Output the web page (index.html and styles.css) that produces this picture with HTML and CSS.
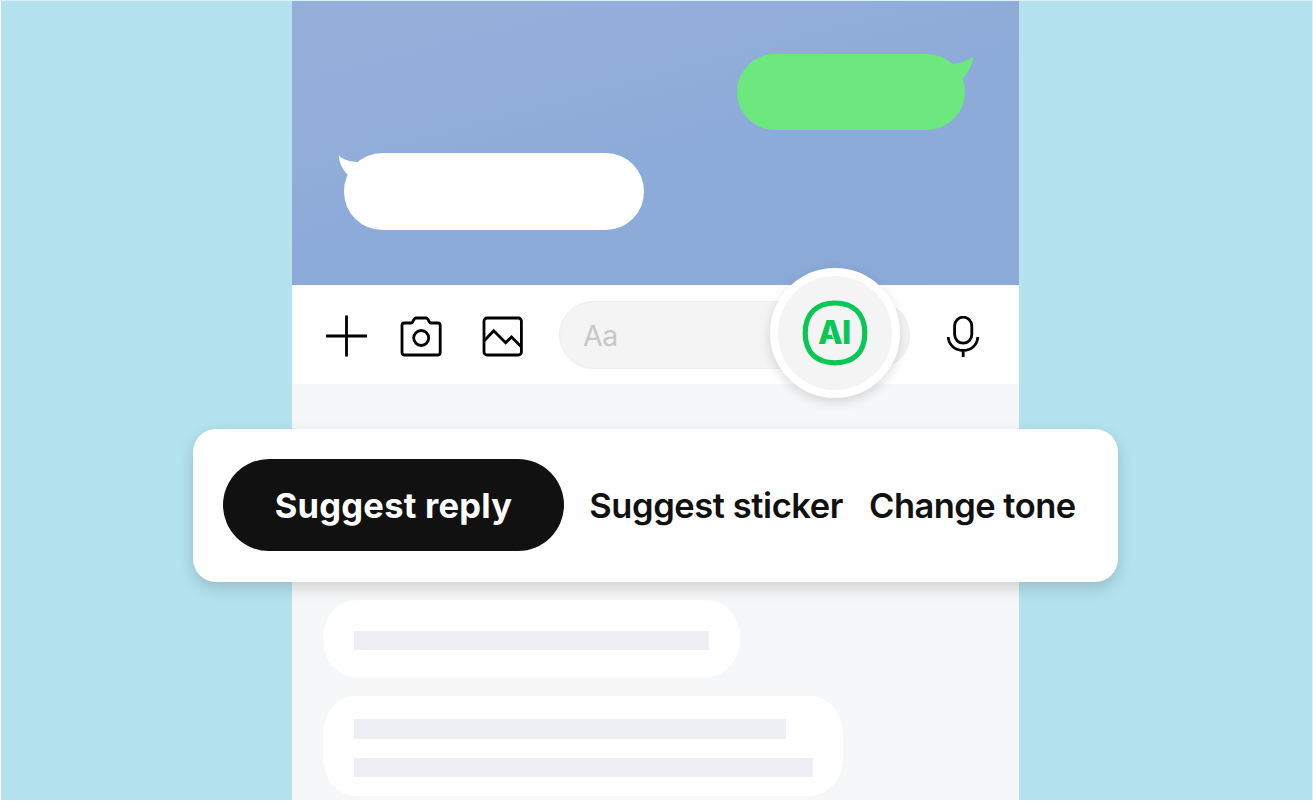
FILE: index.html
```html
<!DOCTYPE html>
<html lang="en">
<head>
<meta charset="utf-8">
<title>AI chat suggestions</title>
<link rel="stylesheet" href="styles.css">
</head>
<body>
<div class="stage">
  <main class="phone">
    <section class="chat">
      <div class="bubble bubble-sent">
        <svg class="tail tail-sent" width="28" height="28" viewBox="0 0 28 28"><path d="M4 9.8C12 9.3 18 7 24.3 2.6C23.5 11 19.5 18.5 13.6 24.6L2 26Z" fill="#6de87e"/></svg>
      </div>
      <div class="bubble bubble-received">
        <svg class="tail tail-received" width="28" height="28" viewBox="0 0 28 28"><path d="M3.7 2.3C8.5 7 15 8.8 22.6 9L25 24L12.7 21.8C7.5 16.5 4.2 10 3.7 2.3Z" fill="#fff"/></svg>
      </div>
    </section>
    <section class="toolbar">
      <svg class="icon icon-plus" width="42" height="42" viewBox="0 0 42 42"><path d="M20.5 0.5V41.5M0 21H41"/></svg>
      <svg class="icon icon-camera" width="42" height="42" viewBox="0 0 42 42"><path d="M4 7H11.2Q12 7 12.5 6L14.3 3Q15 2 16 2H26Q27 2 27.7 3L29.5 6Q30 7 30.8 7H38Q40.2 7 40.2 9.4V36.6Q40.2 39 38 39H4.2Q2 39 2 36.6V9.4Q2 7 4 7Z"/><circle cx="21.2" cy="22" r="7.5"/></svg>
      <svg class="icon icon-picture" width="42" height="42" viewBox="0 0 42 42"><rect x="2" y="2" width="37.4" height="37" rx="3"/><path d="M2 25L11.7 14.7L23.7 26.7L29.5 21L39.5 31"/></svg>
      <div class="input">Aa</div>
      <svg class="icon icon-mic" width="34" height="42" viewBox="0 0 34 42"><rect x="8.6" y="1.2" width="17.2" height="26" rx="8.6"/><path d="M2.2 21C2.8 29 9 34.5 17.2 34.5S31.2 29 31.8 21M17.2 34.5V41"/></svg>
      <div class="ai-button">
        <svg class="ai-ring" width="66" height="66" viewBox="0 0 66 66"><path d="M33 3C51 3 62.8 13 62.8 33S51 62.8 33 62.8S3.2 53 3.2 33S15 3 33 3Z"/><path class="ai-notch" d="M30 34.6L31.6 38.4"/></svg>
        <span class="ai-label">AI</span>
      </div>
    </section>
    <section class="results">
      <div class="result result-short"><div class="line line-1"></div></div>
      <div class="result result-long"><div class="line line-2"></div><div class="line line-3"></div></div>
    </section>
  </main>
  <nav class="suggestions">
    <span class="option option-active">Suggest reply</span>
    <span class="option option-sticker">Suggest sticker</span>
    <span class="option option-tone">Change tone</span>
  </nav>
</div>
</body>
</html>
```
FILE: styles.css
```css
* { box-sizing: border-box; }
body { margin: 0; background: #fff; font-family: Inter, "Liberation Sans", sans-serif; }
.stage {
  position: relative;
  width: 1313px;
  height: 801px;
  border: 1px solid #fff;
  border-top-color: #dcf2f7;
  border-right-color: #dcf2f7;
  background: #b4e2ee;
  overflow: hidden;
}
.phone { width: 726.8px; height: 800px; margin-left: 291.2px; display: flex; flex-direction: column; }
.chat {
  height: 284.4px;
  flex: none;
  padding: 52.8px 53.5px 0 52.3px;
  background: linear-gradient(165deg, #95afdb 0%, #93aeda 25%, #8dabd9 52%, #8caad8 100%);
}
.bubble { position: relative; height: 76.4px; border-radius: 38.2px; }
.bubble-sent { width: 228px; margin-left: auto; background: #6de87e; }
.bubble-received { width: 300px; margin-top: 23px; background: #fff; }
.tail { position: absolute; top: 0; }
.tail-sent { right: -12px; }
.tail-received { left: -9px; }
.toolbar {
  position: relative;
  flex: none;
  height: 98.8px;
  padding: 0 38px 0 33.8px;
  display: flex;
  align-items: center;
  background: #fff;
}
.icon { flex: none; fill: none; stroke: #000; stroke-width: 2.8; }
.icon-plus { margin-top: 3px; }
.icon-camera { margin: 4px 0 0 32.2px; }
.icon-picture { margin: 4px 0 0 39.8px; }
.input {
  margin-left: 35px;
  width: 351.5px;
  height: 68px;
  padding-left: 23px;
  border: 1px solid #eee;
  border-radius: 34px;
  background: #f4f4f4;
  color: #c8c8c8;
  font-size: 28.5px;
  letter-spacing: -.5px;
  line-height: 68px;
}
.icon-mic { margin: 4px 0 0 35.7px; }
.ai-button {
  position: absolute;
  left: 478px;
  top: -17.5px;
  width: 130px;
  height: 130px;
  border: 8px solid #fff;
  border-radius: 50%;
  background: #f4f4f4;
  box-shadow: 0 4px 12px rgba(0, 0, 0, .14);
  display: grid;
  place-items: center;
}
.ai-ring, .ai-label { grid-area: 1 / 1; }
.ai-ring { fill: none; stroke: #07c755; stroke-width: 5.2; z-index: 1; }
.ai-notch { stroke: #f4f4f4; stroke-width: 1; }
.ai-label {
  margin-left: -2px;
  color: #07c755;
  font-size: 32px;
  font-weight: 800;
  line-height: 32px;
  letter-spacing: -.6px;
}
.results { flex: 1; padding: 216px 30.8px 0; background: #f5f7f9; }
.result { background: #fff; border-radius: 32px / 38px; }
.result-short { width: 417px; height: 77px; padding: 30.5px 31px; }
.result-long { width: 520.5px; height: 100px; margin-top: 19px; padding: 23.2px 31px; }
.line { height: 19.3px; background: #edeff4; }
.line-1 { width: 355.3px; }
.line-2 { width: 432px; }
.line-3 { width: 459px; margin-top: 19.2px; }
.suggestions {
  position: absolute;
  left: 192px;
  top: 427.8px;
  width: 925.2px;
  height: 152.8px;
  padding: 0 30px;
  border-radius: 23px;
  background: #fff;
  box-shadow: 0 6px 16px rgba(0, 0, 0, .16);
  display: flex;
  align-items: center;
  color: #111;
  font-size: 34.5px;
  font-weight: 600;
  white-space: nowrap;
}
.option-active {
  width: 341px;
  height: 92px;
  padding-top: 1px;
  border-radius: 46px;
  background: #111;
  color: #fff;
  font-weight: 700;
  letter-spacing: .25px;
  text-align: center;
  line-height: 92px;
}
.option-sticker { margin-left: 25.3px; letter-spacing: -.43px; }
.option-tone { margin-left: 26px; letter-spacing: -.54px; }
```
